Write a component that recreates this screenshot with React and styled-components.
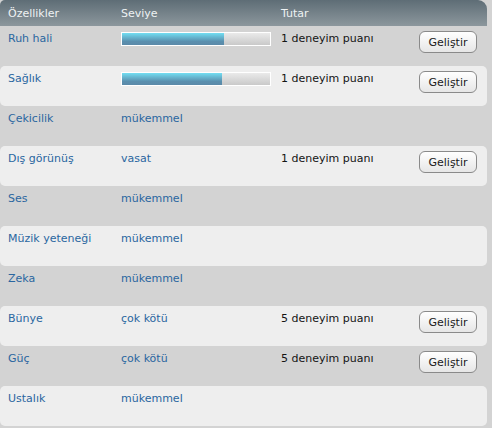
import React from "react";
import styled, { createGlobalStyle } from "styled-components";

const GlobalStyle = createGlobalStyle`
  html, body {
    margin: 0;
    padding: 0;
    background: #d3d3d3;
  }
  body {
    font-family: "DejaVu Sans", Verdana, sans-serif;
    font-size: 11px;
  }
`;

const rows = [
  { name: "Ruh hali", bar: 102, cost: "1 deneyim puanı" },
  { name: "Sağlık", bar: 100, cost: "1 deneyim puanı" },
  { name: "Çekicilik", level: "mükemmel" },
  { name: "Dış görünüş", level: "vasat", cost: "1 deneyim puanı" },
  { name: "Ses", level: "mükemmel" },
  { name: "Müzik yeteneği", level: "mükemmel" },
  { name: "Zeka", level: "mükemmel" },
  { name: "Bünye", level: "çok kötü", cost: "5 deneyim puanı" },
  { name: "Güç", level: "çok kötü", cost: "5 deneyim puanı" },
  { name: "Ustalık", level: "mükemmel" },
];

const Table = () => (
  <Wrapper>
    <Header>
      <span>Özellikler</span>
      <span>Seviye</span>
      <span>Tutar</span>
    </Header>
    {rows.map((r, i) => (
      <Row key={r.name} light={i % 2 === 1}>
        <Name>{r.name}</Name>
        {r.bar ? (
          <Bar>
            <Fill style={{ width: r.bar }} />
          </Bar>
        ) : (
          <Level>{r.level}</Level>
        )}
        <Cost>{r.cost}</Cost>
        <div>{r.cost && <Button>Geliştir</Button>}</div>
      </Row>
    ))}
  </Wrapper>
);

export default function App() {
  return (
    <>
      <GlobalStyle />
      <Table />
    </>
  );
}

const Wrapper = styled.div`
  width: 487px;
  height: 428px;
  background: #d3d3d3;
`;

const Header = styled.div`
  display: grid;
  grid-template-columns: 113px 160px 1fr;
  height: 26px;
  align-items: center;
  padding-left: 8px;
  border-radius: 5px 9px 0 0;
  background: linear-gradient(#5e6d76, #8c979d);
  color: #eef2f3;
  font-size: 11px;
`;

const Row = styled.div`
  display: grid;
  grid-template-columns: 113px 160px 138px 1fr;
  align-items: start;
  height: 40px;
  box-sizing: border-box;
  padding: 6px 0 0 8px;
  line-height: 14px;
  border-radius: 5px;
  background: ${({ light }) => (light ? "#eeeeee" : "transparent")};
`;

const Name = styled.div`
  color: #2a66a0;
`;

const Level = styled.div`
  color: #2a66a0;
`;

const Cost = styled.div`
  color: #141414;
`;

const Bar = styled.div`
  width: 150px;
  height: 14px;
  box-sizing: border-box;
  border: 1px solid #ffffff;
  background: linear-gradient(#eaeaea, #c9c9c9);
`;

const Fill = styled.div`
  height: 100%;
  background: linear-gradient(#72def2, #5a8fae 70%, #5b8aa9);
`;

const Button = styled.button`
  margin-top: -1px;
  width: 58px;
  height: 22px;
  padding: 0;
  font-family: "DejaVu Sans", Verdana, sans-serif;
  font-size: 11px;
  color: #1a1a1a;
  border: 1px solid #8a8a8a;
  border-radius: 6px;
  background: linear-gradient(#ffffff, #e6e6e6);
`;
